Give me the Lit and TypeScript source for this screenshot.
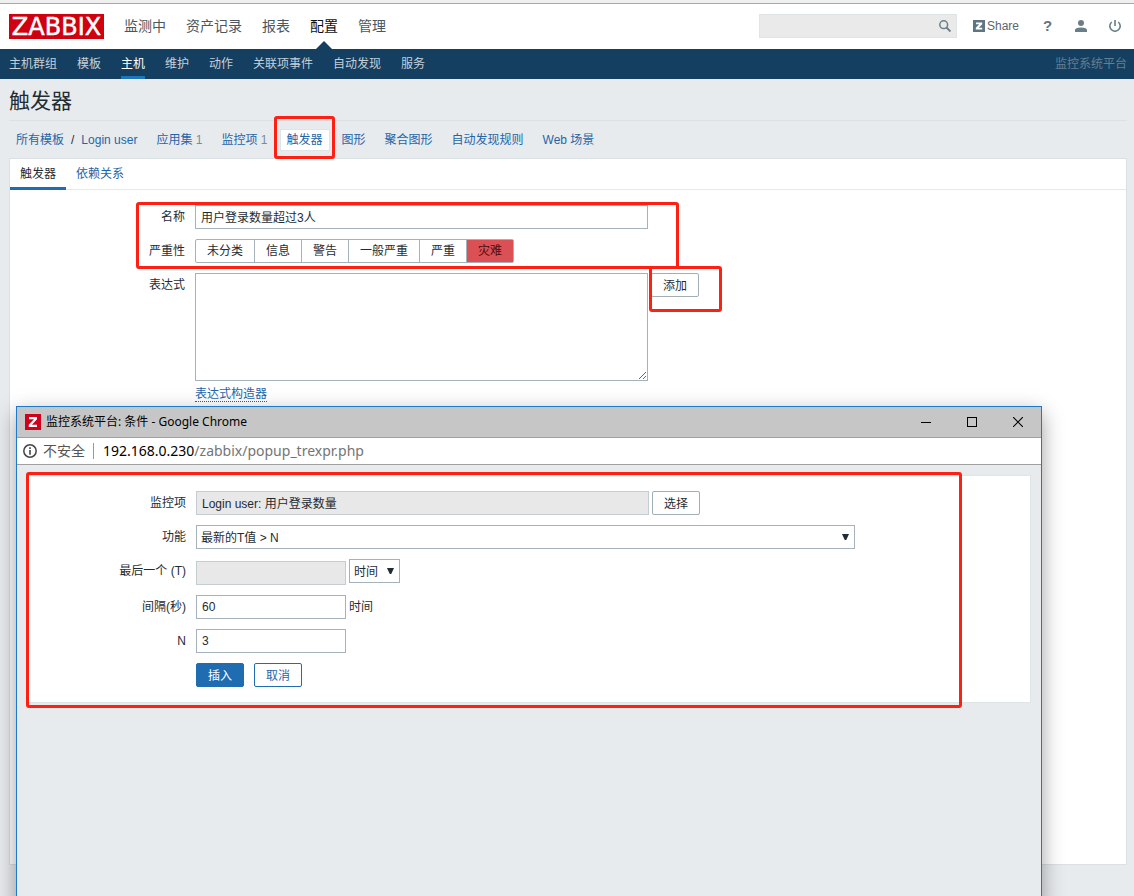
import { LitElement, html, css, svg } from "lit";
import { customElement, state } from "lit/decorators.js";
import { classMap } from "lit/directives/class-map.js";

const controls = css`
  * {
    box-sizing: border-box;
  }
  a {
    color: #1f65a8;
    text-decoration: none;
  }
  input,
  select,
  textarea,
  button {
    margin: 0;
    font: inherit;
    color: inherit;
  }
  .field {
    height: 24px;
    padding: 0 5px;
    border: 1px solid #a5b2ba;
    border-radius: 0;
    background: #fff;
  }
  .field[readonly] {
    background: #e8e8e8;
    border-color: #c3cdd2;
  }
  .wide {
    width: 453px;
    padding-top: 2px;
  }
  .short {
    width: 150px;
  }
  .btn {
    height: 24px;
    padding: 1px 11px 0;
    border: 1px solid #a0aeb5;
    border-radius: 2px;
    background: #fff;
    line-height: 22px;
  }
  .form {
    display: grid;
    row-gap: 10px;
    column-gap: 10px;
    align-items: start;
  }
  .label {
    text-align: right;
    line-height: 24px;
  }
  .cell {
    display: flex;
    align-items: flex-start;
    gap: 3px;
    line-height: 24px;
  }
`;

@customElement("condition-window")
export class ConditionWindow extends LitElement {
  static styles = [
    controls,
    css`
      :host {
        display: flex;
        flex-direction: column;
        border: 1px solid #1b7acb;
        background: #e8ebee;
        box-shadow: 0 7px 20px rgba(0, 0, 0, 0.38);
      }
      .title {
        display: flex;
        align-items: center;
        height: 31px;
        padding-left: 8px;
        border-bottom: 1px solid #a0a0a0;
        background: #c6c6c6;
        color: #000;
        font-family: "Noto Sans", "Noto Sans CJK SC", sans-serif;
        line-height: 20px;
      }
      .title .name {
        flex: 1;
        padding-left: 5px;
      }
      .tool {
        width: 46px;
        height: 28px;
        padding: 0;
        border: 0;
        background: none;
      }
      .tool svg {
        display: block;
        margin: auto;
      }
      .address {
        display: flex;
        align-items: center;
        height: 27px;
        padding-left: 6px;
        border-bottom: 1px solid #a0a0a0;
        background: #fff;
        color: #555;
        font: 14px/20px "Noto Sans", "Noto Sans CJK SC", sans-serif;
      }
      .address .warn {
        padding: 0 8px 0 6px;
      }
      .address .url {
        padding-left: 9px;
        color: #757575;
      }
      .address .bar {
        width: 1px;
        height: 16px;
        background: #999;
      }
      .address b {
        font-weight: 400;
        color: #000;
      }
      .body {
        padding: 10px;
      }
      .panel {
        padding: 15px 0;
        border: 1px solid #dfe4e7;
        background: #fff;
      }
      .form {
        grid-template-columns: 158px 1fr;
      }
      .drop {
        appearance: none;
        padding: 2px 20px 0 4px;
        line-height: 20px;
        background: #fff
          url("data:image/svg+xml,%3Csvg xmlns='http://www.w3.org/2000/svg' width='7' height='6'%3E%3Cpath d='M0 0h7L4.200 6h-1.400z' fill='%231f2c33'/%3E%3C/svg%3E")
          no-repeat right 5px top 8px;
      }
      .function {
        width: 659px;
        max-width: 100%;
      }
      .unit {
        width: 51px;
      }
      .low {
        margin-top: 2px;
      }
      .actions {
        gap: 10px;
      }
      .primary {
        border-color: #1f6cb0;
        background: #1f6cb0;
        color: #fff;
      }
      .secondary {
        border-color: #1f6cb0;
        color: #1f65a8;
      }
    `,
  ];

  render() {
    return html`
      <div class="title">
        <svg width="16" height="16" viewBox="0 0 16 16">
          <rect width="16" height="16" fill="#d0021b" />
          <path d="M4 3h8v2.300L6.900 10.700H12V13H3.800v-2.300L8.900 5.300H4z" fill="#fff" />
        </svg>
        <span class="name">监控系统平台: 条件 - Google Chrome</span>
        <button class="tool" aria-label="最小化">
          <svg width="10" height="10"><path d="M0 5.500h10" stroke="#000" /></svg>
        </button>
        <button class="tool" aria-label="最大化">
          <svg width="10" height="10"><rect x=".5" y=".5" width="9" height="9" fill="none" stroke="#000" /></svg>
        </button>
        <button class="tool" aria-label="关闭">
          <svg width="10" height="10"><path d="M0 0l10 10M10 0L0 10" stroke="#000" stroke-width="1.100" /></svg>
        </button>
      </div>
      <div class="address">
        <svg width="14" height="14" viewBox="0 0 14 14">
          <circle cx="7" cy="7" r="6.200" fill="none" stroke="#444" stroke-width="1.500" />
          <path d="M6.200 3.300h1.600v1.600H6.200zM6.200 6h1.600v4.700H6.200z" fill="#444" />
        </svg>
        <span class="warn">不安全</span>
        <span class="bar"></span>
        <span class="url"><b>192.168.0.230</b>/zabbix/popup_trexpr.php</span>
      </div>
      <div class="body">
        <form class="panel form" @submit=${(e: Event) => e.preventDefault()}>
          <label class="label" for="item">监控项</label>
          <div class="cell">
            <input class="field wide" id="item" readonly value="Login user: 用户登录数量" />
            <button class="btn" type="button">选择</button>
          </div>
          <label class="label" for="func">功能</label>
          <div class="cell">
            <select class="field drop function" id="func">
              <option>最新的T值 &gt; N</option>
            </select>
          </div>
          <label class="label" for="last">最后一个 (T)</label>
          <div class="cell">
            <input class="field short low" id="last" readonly />
            <select class="field drop unit" aria-label="时间">
              <option>时间</option>
            </select>
          </div>
          <label class="label" for="shift">间隔(秒)</label>
          <div class="cell">
            <input class="field short" id="shift" value="60" />
            <span>时间</span>
          </div>
          <label class="label" for="n">N</label>
          <div class="cell"><input class="field short" id="n" value="3" /></div>
          <span></span>
          <div class="cell actions">
            <button class="btn primary">插入</button>
            <button class="btn secondary" type="button">取消</button>
          </div>
        </form>
      </div>
    `;
  }
}

const SECTIONS = ["监测中", "资产记录", "报表", "配置", "管理"];
const PAGES = ["主机群组", "模板", "主机", "维护", "动作", "关联项事件", "自动发现", "服务"];
const SEVERITIES = ["未分类", "信息", "警告", "一般严重", "严重", "灾难"];
const LINKS: { text: string; count?: number; current?: boolean }[] = [
  { text: "应用集", count: 1 },
  { text: "监控项", count: 1 },
  { text: "触发器", current: true },
  { text: "图形" },
  { text: "聚合图形" },
  { text: "自动发现规则" },
  { text: "Web 场景" },
];

const icon = (body: unknown) => html`<svg width="12" height="12" viewBox="0 0 12 12">${body}</svg>`;
const userIcon = svg`<circle cx="6" cy="3" r="3" fill="#6a7e89"/><path d="M0 12v-2Q0 7.500 6 7.500T12 10v2z" fill="#6a7e89"/>`;
const powerIcon = svg`<path d="M2.700 2A5.200 5.200 0 1 0 9.300 2M6 0v6" fill="none" stroke="#6a7e89" stroke-width="1.600"/>`;
const shareIcon = svg`<rect width="12" height="12" fill="#5f7682"/><path d="M3 2.500h6.200v1.800L5.800 7.800h3.400v1.800H2.800V7.800l3.400-3.500H3z" fill="#fff"/>`;
const searchIcon = svg`<circle cx="4.700" cy="4.700" r="3.900" fill="none" stroke="#6a7e89" stroke-width="1.500"/><path d="M7.500 7.500l4 4" stroke="#6a7e89" stroke-width="1.900"/>`;

@customElement("app-root")
export class AppRoot extends LitElement {
  @state() private severity = "灾难";

  static styles = [
    controls,
    css`
      :host {
        position: relative;
        display: flex;
        flex-direction: column;
        min-height: 100vh;
        overflow: hidden;
        background: #e8ebee;
        color: #1f2c33;
        font: 12px/18px "Liberation Sans", "Noto Sans CJK SC", sans-serif;
      }
      .edge {
        height: 4px;
        background: #f0f0f0;
        border-bottom: 1px solid #a9a9a9;
      }
      header {
        display: flex;
        align-items: center;
        height: 45px;
        padding: 0 13px 0 9px;
        background: #fff;
      }
      .logo {
        width: 95px;
        height: 25px;
        background: #cf0010;
        color: #fff;
        font: 24px/26px "DejaVu Sans", sans-serif;
        text-align: center;
        -webkit-text-stroke: 1px #fff;
        -webkit-text-stroke-width: thin;
      }
      .sections {
        display: flex;
        flex: 1;
        gap: 20px;
        padding-left: 20px;
        font-size: 14px;
        line-height: 45px;
      }
      .sections a {
        position: relative;
        color: #4a575e;
      }
      .sections a.on {
        color: #0a1216;
      }
      .sections a.on::after {
        content: "";
        position: absolute;
        left: 50%;
        bottom: 0;
        margin-left: -8px;
        border: 8px solid transparent;
        border-top: 0;
        border-bottom-color: #153f61;
      }
      .search,
      .share,
      .tools {
        height: 24px;
        margin-bottom: 1px;
      }
      .search {
        display: flex;
        align-items: center;
        width: 198px;
        padding: 0 5px;
        border: 1px solid #dfe4e7;
        background: #eaeaea;
      }
      .search input {
        flex: 1;
        min-width: 0;
        height: 22px;
        padding: 0;
        border: 0;
        background: none;
        outline: 0;
      }
      .plain {
        display: flex;
        padding: 0;
        border: 0;
        background: none;
      }
      .share {
        display: flex;
        align-items: center;
        gap: 2px;
        margin-left: 16px;
        margin-right: 24px;
        color: #5a676e;
      }
      .tools {
        display: flex;
        align-items: center;
        gap: 22px;
      }
      .help {
        width: 10px;
        color: #5f7682;
        font-size: 15px;
        font-weight: 700;
      }
      .pages {
        display: flex;
        gap: 20px;
        height: 30px;
        padding: 0 7px 0 9px;
        background: #153f61;
        line-height: 30px;
      }
      .pages a {
        color: #c5d0d8;
      }
      .pages a.on {
        color: #fff;
        box-shadow: inset 0 -3px #1f75ba;
      }
      .pages .server {
        margin-left: auto;
        color: #647f93;
      }
      main {
        display: flex;
        flex: 1;
        flex-direction: column;
        padding: 0 7px 31px 9px;
      }
      h1 {
        margin: 0;
        height: 42px;
        border-bottom: 1px solid #dae0e3;
        font-size: 21px;
        font-weight: 400;
        line-height: 44px;
      }
      .crumbs {
        display: flex;
        align-items: center;
        gap: 5px;
        height: 37px;
      }
      .crumbs a {
        padding: 0 6px;
        border: 1px solid transparent;
        line-height: 20px;
      }
      .crumbs a.on {
        border-color: #dfe4e7;
        background: #fff;
      }
      .crumbs .path {
        display: flex;
        align-items: center;
      }
      .count {
        color: #768d99;
      }
      .card {
        flex: 1;
        border: 1px solid #dae0e3;
        background: #fff;
      }
      .tabs {
        display: flex;
        height: 31px;
        border-bottom: 1px solid #e5e8ea;
      }
      .tabs a {
        height: 31px;
        padding: 0 10px;
        line-height: 30px;
      }
      .tabs a.on {
        color: #1f2c33;
        border-bottom: 3px solid #1f6cb0;
      }
      .form {
        grid-template-columns: 175px 1fr;
        padding-top: 15px;
      }
      .severity {
        display: flex;
        margin: 0;
        padding: 0;
        border: 1px solid #a5b2ba;
        border-radius: 2px;
        line-height: 22px;
      }
      .severity label {
        padding: 0 11px;
      }
      .severity label + label {
        border-left: 1px solid #a5b2ba;
      }
      .severity label.on {
        background: #da5055;
        color: #4b0c10;
      }
      .severity input {
        position: absolute;
        opacity: 0;
      }
      .expression {
        height: 108px;
        padding: 4px 5px;
      }
      .builder {
        margin-top: -6px;
        line-height: 18px;
        height: 17px;
        border-bottom: 1px dotted #1f65a8;
      }
      condition-window {
        position: absolute;
        top: 406px;
        left: 16px;
        right: 92px;
        bottom: -10px;
      }
      .mark {
        position: absolute;
        border: 3px solid #ff2014;
        border-radius: 3px;
        pointer-events: none;
      }
      .mark-link {
        left: 274px;
        top: 116px;
        width: 61px;
        height: 43px;
      }
      .mark-name {
        left: 136px;
        top: 202px;
        width: 543px;
        height: 67px;
      }
      .mark-add {
        left: 649px;
        top: 266px;
        width: 73px;
        height: 46px;
      }
      .mark-condition {
        left: 26px;
        top: 472px;
        width: 936px;
        height: 236px;
      }
    `,
  ];

  render() {
    return html`
      <div class="edge"></div>
      <header>
        <a class="logo" href="#">ZABBIX</a>
        <nav class="sections">
          ${SECTIONS.map((s) => html`<a href="#" class=${classMap({ on: s === "配置" })}>${s}</a>`)}
        </nav>
        <div class="search">
          <input type="text" aria-label="搜索" />
          <button class="plain" aria-label="搜索">${icon(searchIcon)}</button>
        </div>
        <a class="share" href="#">${icon(shareIcon)}Share</a>
        <div class="tools">
          <a class="help" href="#">?</a>
          <a class="plain" href="#" aria-label="用户">${icon(userIcon)}</a>
          <a class="plain" href="#" aria-label="退出">${icon(powerIcon)}</a>
        </div>
      </header>
      <nav class="pages">
        ${PAGES.map((p) => html`<a href="#" class=${classMap({ on: p === "主机" })}>${p}</a>`)}
        <span class="server">监控系统平台</span>
      </nav>
      <main>
        <h1>触发器</h1>
        <nav class="crumbs">
          <span class="path"><a href="#">所有模板</a>/<a href="#">Login user</a></span>
          ${LINKS.map(
            (l) => html`<a href="#" class=${classMap({ on: !!l.current })}
              >${l.text}${l.count ? html` <span class="count">${l.count}</span>` : ""}</a
            >`
          )}
        </nav>
        <section class="card">
          <nav class="tabs"><a class="on" href="#">触发器</a><a href="#">依赖关系</a></nav>
          <form class="form" @submit=${(e: Event) => e.preventDefault()}>
            <label class="label" for="name">名称</label>
            <div class="cell"><input class="field wide" id="name" value="用户登录数量超过3人" /></div>
            <span class="label" id="severity">严重性</span>
            <div class="cell">
              <div class="severity" role="radiogroup" aria-labelledby="severity">
                ${SEVERITIES.map(
                  (s) => html`<label class=${classMap({ on: s === this.severity })}
                    ><input
                      type="radio"
                      name="severity"
                      .checked=${s === this.severity}
                      @change=${() => (this.severity = s)}
                    />${s}</label
                  >`
                )}
              </div>
            </div>
            <label class="label" for="expression">表达式</label>
            <div class="cell">
              <textarea class="field wide expression" id="expression"></textarea>
              <button class="btn" type="button">添加</button>
            </div>
            <span></span>
            <div class="cell"><a class="builder" href="#">表达式构造器</a></div>
          </form>
        </section>
      </main>
      <condition-window></condition-window>
      <div class="mark mark-link"></div>
      <div class="mark mark-name"></div>
      <div class="mark mark-add"></div>
      <div class="mark mark-condition"></div>
    `;
  }
}
